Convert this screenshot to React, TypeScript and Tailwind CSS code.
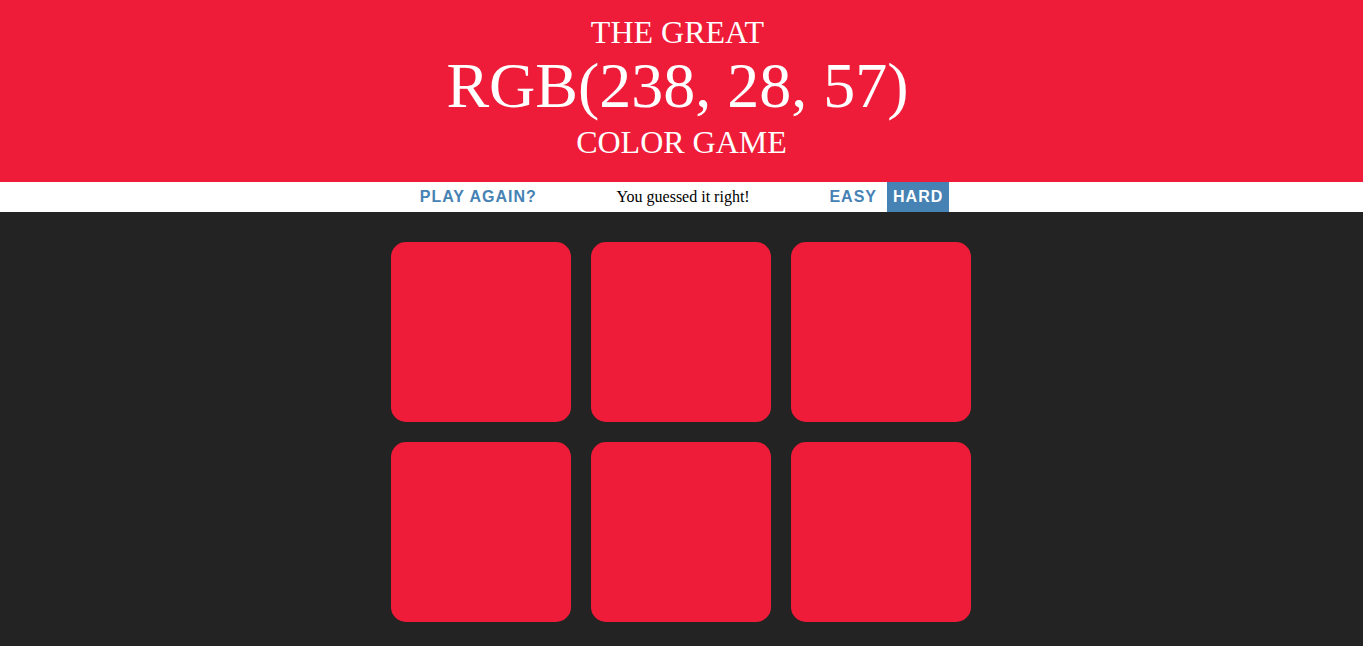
import React from "react";

export default function App() {
  const color = "rgb(238, 28, 57)";
  return (
    <div className="min-h-screen bg-[#232323]" style={{ fontFamily: '"Liberation Serif", "Times New Roman", serif' }}>
      <header className="bg-[rgb(238,28,57)] text-white text-center uppercase font-normal pt-[15px] pb-[22px]">
        <div className="text-[32px] leading-[35px] pr-[8px]">The Great</div>
        <div className="text-[64px] leading-[70px] mt-[1px] pr-[8px]">RGB(238, 28, 57)</div>
        <div className="text-[32px] leading-[35px] mt-[4px]">Color Game</div>
      </header>
      <div className="bg-white h-[30px] text-center text-[16px] leading-[30px] whitespace-nowrap">
        <button className="inline-block h-full px-[6px] align-top uppercase font-bold tracking-[1px] text-[#4682b4] text-[16px] leading-[30px] bg-transparent" style={{ fontFamily: '"Liberation Sans", Arial, sans-serif' }}>
          Play Again?
        </button>{" "}
        <span className="inline-block w-[20%] align-top text-black">You guessed it right!</span>{" "}
        <button className="inline-block h-full px-[6px] align-top uppercase font-bold tracking-[1px] text-[#4682b4] text-[16px] leading-[30px] bg-transparent" style={{ fontFamily: '"Liberation Sans", Arial, sans-serif' }}>
          Easy
        </button>{" "}
        <button className="inline-block h-full px-[6px] align-top uppercase font-bold tracking-[1px] text-white bg-[#4682b4] text-[16px] leading-[30px]" style={{ fontFamily: '"Liberation Sans", Arial, sans-serif' }}>
          Hard
        </button>
      </div>
      <div className="max-w-[600px] mx-auto mt-[20px] flex flex-wrap">
        {Array.from({ length: 6 }).map((_, i) => (
          <div key={i} className="w-[30%] pb-[30%] m-[1.66%] rounded-[15px]" style={{ background: color }} />
        ))}
      </div>
    </div>
  );
}
